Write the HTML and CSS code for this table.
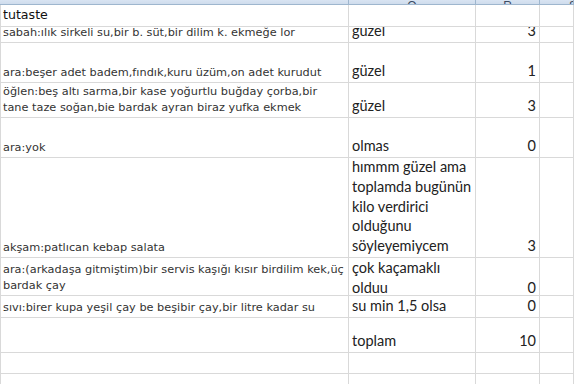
FILE: index.html
```html
<!DOCTYPE html>
<html>
<head>
<meta charset="utf-8">
<link rel="stylesheet" href="styles.css">
</head>
<body>
<div class="sheet">
  <div class="hdr hdr-p"></div>
  <div class="hdr"><span class="letter">Q</span></div>
  <div class="hdr"><span class="letter">R</span></div>
  <div class="hdr hdr-s"><span class="letter">S</span></div>

  <div class="c p title">tutaste</div><div class="c q"></div><div class="c r"></div><div class="c s"></div>

  <div class="c p">sabah:ılık sirkeli su,bir b. süt,bir dilim k. ekmeğe lor</div><div class="c q">güzel</div><div class="c r">3</div><div class="c s"></div>

  <div class="c p">ara:beşer adet badem,fındık,kuru üzüm,on adet kurudut</div><div class="c q">güzel</div><div class="c r">1</div><div class="c s"></div>

  <div class="c p">öğlen:beş altı sarma,bir kase yoğurtlu buğday çorba,bir<br>tane taze soğan,bie bardak ayran biraz yufka ekmek</div><div class="c q">güzel</div><div class="c r">3</div><div class="c s"></div>

  <div class="c p">ara:yok</div><div class="c q">olmas</div><div class="c r">0</div><div class="c s"></div>

  <div class="c p">akşam:patlıcan kebap salata</div><div class="c q">hımmm güzel ama<br>toplamda bugünün<br>kilo verdirici<br>olduğunu<br>söyleyemiycem</div><div class="c r">3</div><div class="c s"></div>

  <div class="c p">ara:(arkadaşa gitmiştim)bir servis kaşığı kısır birdilim kek,üç<br>bardak çay</div><div class="c q tight"><div class="in">çok kaçamaklı<br>olduu</div></div><div class="c r tight"><div class="in">0</div></div><div class="c s"></div>

  <div class="c p">sıvı:birer kupa yeşil çay be beşibir çay,bir litre kadar su</div><div class="c q">su min 1,5 olsa</div><div class="c r">0</div><div class="c s"></div>

  <div class="c p"></div><div class="c q">toplam</div><div class="c r">10</div><div class="c s"></div>

  <div class="c p"></div><div class="c q"></div><div class="c r"></div><div class="c s"></div>

  <div class="c p"></div><div class="c q"></div><div class="c r"></div><div class="c s"></div>
</div>
</body>
</html>
```

FILE: styles.css
```css
html, body {
  margin: 0;
  padding: 0;
  background: #ffffff;
  overflow: hidden;
}

.sheet {
  width: 574px;
  height: 384px;
  overflow: hidden;
  display: grid;
  grid-template-columns: 349px 127px 64px 1fr;
  grid-template-rows: 5px 22px 16px 40px 35px 40px 100px 38px 22px 35px 21px 30px;
}

.hdr {
  box-sizing: border-box;
  background: linear-gradient(#d9e4f2, #cfdcec);
  border-bottom: 1px solid #9eb6ce;
  border-right: 1px solid #9eb6ce;
  overflow: hidden;
  display: flex;
  justify-content: center;
  align-items: flex-end;
  font-family: "Liberation Sans", Arial, sans-serif;
  font-size: 12px;
  color: #3b4c63;
}

.hdr-s {
  justify-content: flex-end;
}

.letter {
  display: block;
  line-height: 12px;
  margin-bottom: -8px;
}

.hdr-s .letter {
  margin-right: -4px;
}

.c {
  box-sizing: border-box;
  border-bottom: 1px solid #d9d9d9;
  border-right: 1px solid #d9d9d9;
  overflow: hidden;
  display: flex;
  flex-direction: column;
  justify-content: flex-end;
  white-space: nowrap;
}

.p {
  border-left: 1px solid #d9d9d9;
  padding: 0 0 1px 2px;
  font-family: "DejaVu Sans", Verdana, sans-serif;
  font-size: 11.3px;
  line-height: 16px;
  color: #333333;
}

.title {
  font-size: 12.6px;
  line-height: 18px;
  color: #111111;
  padding-bottom: 2px;
}

.q {
  padding: 0 0 1px 3px;
  font-family: Lato, "Open Sans", sans-serif;
  font-size: 14.5px;
  line-height: 19.8px;
  color: #222222;
}

.r {
  padding: 0 3px 1px 0;
  font-family: Lato, "Open Sans", sans-serif;
  font-size: 14.5px;
  line-height: 20px;
  color: #222222;
  text-align: right;
}

.tight {
  padding-bottom: 0;
}

.tight .in {
  margin-bottom: -3px;
}
```
